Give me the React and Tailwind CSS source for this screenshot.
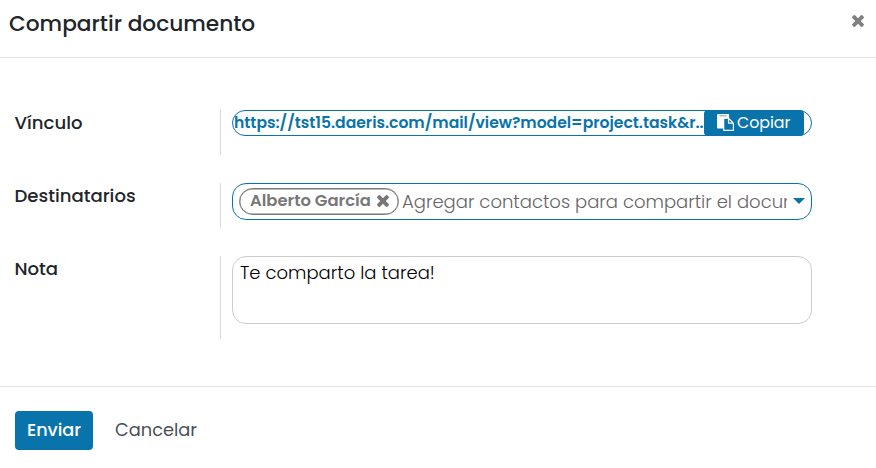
function TimesIcon({ className }) {
  return (
    <svg viewBox="302 330 1188 1188" fill="currentColor" className={className} aria-hidden="true">
      <path d="M1490 1322q0 40-28 68l-136 136q-28 28-68 28t-68-28l-294-294-294 294q-28 28-68 28t-68-28l-136-136q-28-28-28-68t28-68l294-294-294-294q-28-28-28-68t28-68l136-136q28-28 68-28t68 28l294 294 294-294q28-28 68-28t68 28l136 136q28 28 28 68t-28 68l-294 294 294 294q28 28 28 68z" transform="translate(0 -36)" />
    </svg>
  );
}

function PasteIcon({ className }) {
  return (
    <svg viewBox="0 0 1792 1792" fill="currentColor" className={className} aria-hidden="true">
      <path d="M128 128h960v384H128z" fillOpacity=".6" />
      <path d="M768 1664h896v-640h-416q-40 0-68-28t-28-68v-416h-384v1152zm256-1440v-64q0-13-9.5-22.5t-22.5-9.5h-704q-13 0-22.5 9.5t-9.5 22.5v64q0 13 9.5 22.5t22.5 9.5h704q13 0 22.5-9.5t9.5-22.5zm256 672h299l-299-299v299zm512 128v672q0 40-28 68t-68 28h-960q-40 0-68-28t-28-68v-160h-544q-40 0-68-28t-28-68v-1344q0-40 28-68t68-28h1088q40 0 68 28t28 68v328q21 13 36 28l408 408q28 28 48 76t20 88z" />
    </svg>
  );
}

function Field({ label, height, children }) {
  return (
    <div className={`flex ${height}`}>
      <div className="w-[220px] shrink-0 pl-[14.5px] text-[18.1px] font-medium leading-[26px] text-[#212529]">
        {label}
      </div>
      <div className="w-[592px] shrink-0 border-l border-[#d9dadb] pl-[11px]">{children}</div>
    </div>
  );
}

export default function App() {
  return (
    <div className="flex h-[468px] w-[876px] flex-col overflow-hidden whitespace-nowrap bg-white font-[Poppins,Inter,sans-serif] text-[#212529]">
      <header className="flex h-[58px] shrink-0 items-start justify-between border-b border-[#dee2e6] pl-[9px] pr-3">
        <h1 className="pt-2 text-[21.7px] font-medium leading-8">Compartir documento</h1>
        <button className="pt-[15px] text-[#808080]" aria-label="Cerrar">
          <TimesIcon className="size-3" />
        </button>
      </header>

      <main className="flex h-[328px] shrink-0 flex-col gap-7 pt-[52px]">
        <Field label="Vínculo" height="h-[45px]">
          <div className="flex h-[26px] w-[580px] rounded-[13px] border border-[#0874ab] pl-px">
            <span className="w-[470px] shrink-0 text-[15.6px] font-semibold leading-6 text-[#0874ab]">
              https://tst15.daeris.com/mail/view?model=project.task&amp;r..
            </span>
            <button className="-mt-px flex h-[26px] w-[100px] shrink-0 items-center gap-[3px] rounded-[4px] bg-[#0874ab] pl-[13px] text-[15.8px] text-white">
              <PasteIcon className="-mt-0.5 size-[17px]" />
              <span>Copiar</span>
            </button>
          </div>
        </Field>

        <Field label="Destinatarios" height="h-[45px]">
          <div className="flex h-[37px] w-[580px] items-start rounded-[14px] border border-[#0874ab] pl-1.5 pt-1">
            <span className="flex h-[27px] w-[160px] shrink-0 items-center gap-1.5 rounded-[14px] border border-[#777] pl-[10px] text-[16.4px] font-semibold text-[#777] ring-[0.4px] ring-inset ring-[#777]">
              <span>Alberto García</span>
              <TimesIcon className="-mt-0.5 size-3" />
            </span>
            <span className="ml-[3px] w-[385px] shrink-0 overflow-hidden text-[18px] font-light leading-7 text-[#666]">
              Agregar contactos para compartir el documento
            </span>
            <svg viewBox="0 0 12 6" className="ml-1.5 mt-2.5 h-1.5 w-3 shrink-0 fill-[#0874ab]" aria-hidden="true">
              <path d="M0 0h12L6 6z" />
            </svg>
          </div>
        </Field>

        <Field label="Nota" height="h-[83px]">
          <div className="h-[68px] w-[580px] rounded-[14px] border border-[#ccc] pl-[7px] pt-[3px] text-[18px] font-light leading-[26px] text-black">
            Te comparto la tarea!
          </div>
        </Field>
      </main>

      <footer className="flex flex-1 items-start border-t border-[#dee2e6] pl-[15px] pt-6">
        <button className="h-[39px] w-[78px] rounded-[4px] bg-[#0874ab] pb-px text-[17.6px] font-medium leading-[38px] text-white">
          Enviar
        </button>
        <button className="ml-[22px] h-[39px] pb-px text-[17.8px] leading-[38px] text-[#495057]">
          Cancelar
        </button>
      </footer>
    </div>
  );
}
